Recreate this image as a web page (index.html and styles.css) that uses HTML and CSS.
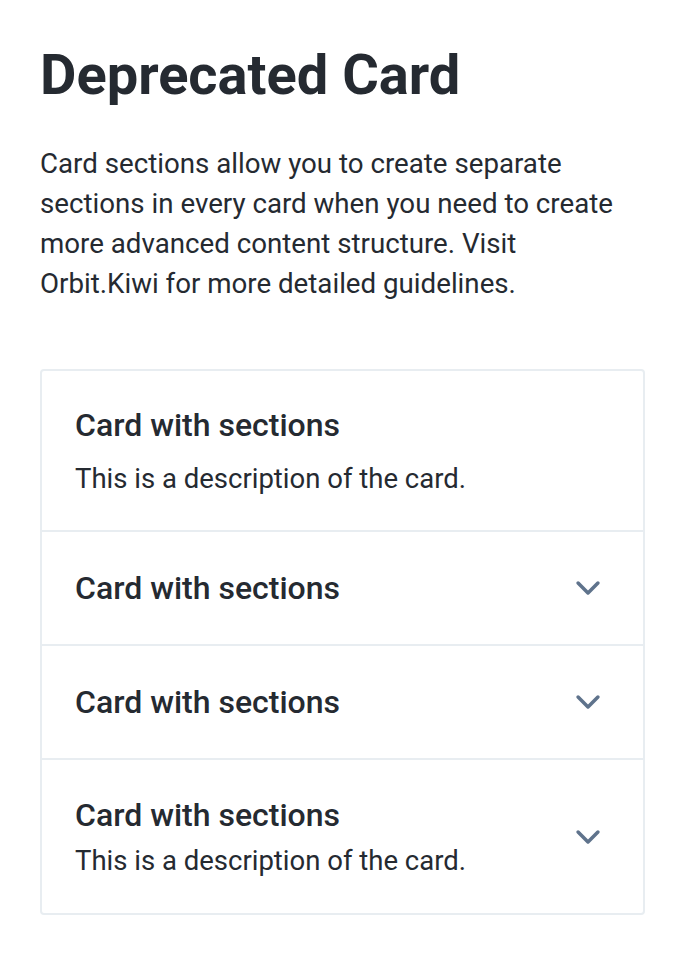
FILE: index.html
```html
<!DOCTYPE html>
<html lang="en">
<head>
<meta charset="utf-8">
<title>Deprecated Card</title>
<link rel="stylesheet" href="styles.css">
</head>
<body>
<main class="page">
  <h1 class="title">Deprecated Card</h1>
  <p class="intro">Card sections allow you to create separate sections in every card when you need to create more advanced content structure. Visit Orbit.Kiwi for more detailed guidelines.</p>
  <div class="card">
    <section class="section section-first">
      <div class="section-text">
        <h3 class="section-title">Card with sections</h3>
        <p class="section-desc section-desc-spaced">This is a description of the card.</p>
      </div>
    </section>
    <section class="section">
      <div class="section-text">
        <h3 class="section-title">Card with sections</h3>
      </div>
      <svg class="chevron" viewBox="0 0 24 24" aria-hidden="true"><path d="M5 8.5l7 7 7-7" fill="none" stroke="currentColor" stroke-width="2.5" stroke-linecap="round" stroke-linejoin="round"/></svg>
    </section>
    <section class="section">
      <div class="section-text">
        <h3 class="section-title">Card with sections</h3>
      </div>
      <svg class="chevron" viewBox="0 0 24 24" aria-hidden="true"><path d="M5 8.5l7 7 7-7" fill="none" stroke="currentColor" stroke-width="2.5" stroke-linecap="round" stroke-linejoin="round"/></svg>
    </section>
    <section class="section section-last">
      <div class="section-text">
        <h3 class="section-title">Card with sections</h3>
        <p class="section-desc section-desc-tight">This is a description of the card.</p>
      </div>
      <svg class="chevron" viewBox="0 0 24 24" aria-hidden="true"><path d="M5 8.5l7 7 7-7" fill="none" stroke="currentColor" stroke-width="2.5" stroke-linecap="round" stroke-linejoin="round"/></svg>
    </section>
  </div>
</main>
</body>
</html>
```
FILE: styles.css
```css
html, body {
  margin: 0;
  padding: 0;
  background: #ffffff;
}
body {
  font-family: Roboto, "Noto Sans", "Liberation Sans", sans-serif;
  color: #252a31;
}
.page {
  padding: 40px 41px 40px 40px;
}
.title {
  margin: 0;
  padding-top: 3px;
  font-size: 56px;
  line-height: 64px;
  font-weight: 700;
}
.intro {
  margin: 37px 0 0;
  max-width: 590px;
  font-size: 27.7px;
  line-height: 40px;
  font-weight: 400;
}
.card {
  margin-top: 65px;
  border: 2px solid #e8edf1;
  border-radius: 4px;
  background: #fff;
}
.section {
  display: flex;
  align-items: center;
  justify-content: space-between;
  padding: 33px 33px;
  border-top: 2px solid #e8edf1;
}
.section-first {
  border-top: 0;
  padding-top: 31px;
  padding-bottom: 31px;
}
.section-last {
  padding-top: 32px;
  padding-bottom: 32px;
}
.section-text {
  display: flex;
  flex-direction: column;
}
.section-title {
  margin: 0;
  font-size: 32px;
  line-height: 46px;
  font-weight: 500;
}
.section-desc {
  margin: 0;
  font-size: 27.5px;
  line-height: 40px;
}
.section-desc-spaced {
  margin-top: 11px;
}
.section-desc-tight {
  margin-top: 3px;
}
.chevron {
  width: 34px;
  height: 34px;
  color: #5f738c;
  margin-right: 5px;
  flex: none;
}
```
